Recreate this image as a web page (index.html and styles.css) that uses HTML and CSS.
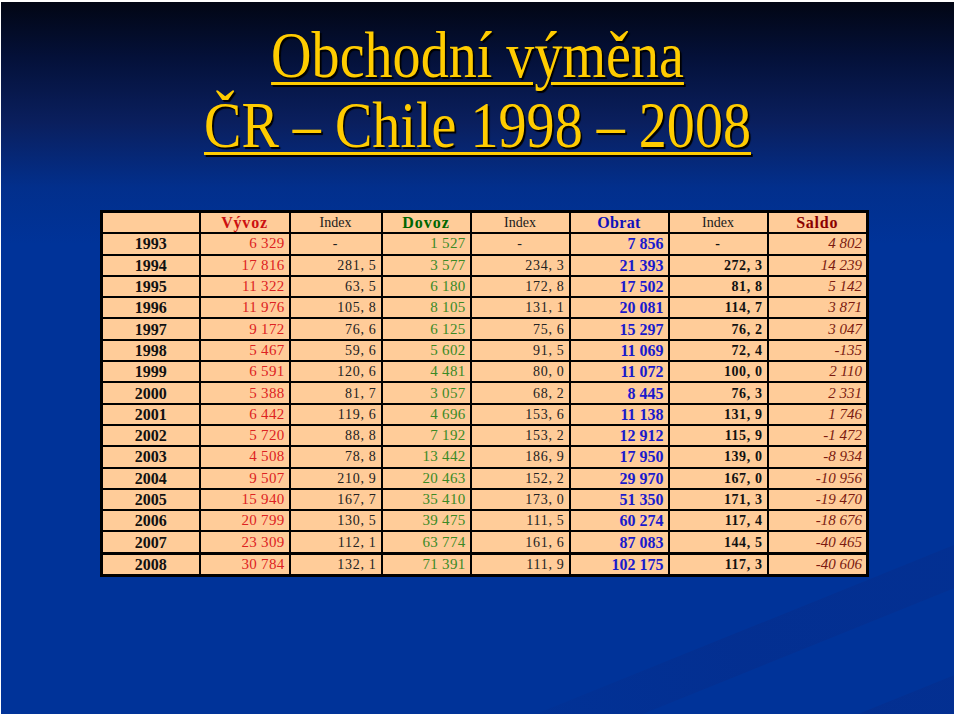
FILE: index.html
```html
<!DOCTYPE html>
<html lang="cs">
<head>
<meta charset="utf-8">
<title>Obchodní výměna ČR – Chile</title>
<link rel="stylesheet" href="styles.css">
</head>
<body>
<div class="slide">
  <h1 class="title">
    <span class="line"><span class="u">Obchodní výměna</span></span>
    <span class="line"><span class="u">ČR – Chile 1998 – 2008</span></span>
  </h1>
  <table class="trade">
    <colgroup>
      <col class="c-year"><col class="c-vyv"><col class="c-i1"><col class="c-dov"><col class="c-i2"><col class="c-obr"><col class="c-i3"><col class="c-sal">
    </colgroup>
    <thead>
      <tr>
        <th></th>
        <th class="h-vyv">Vývoz</th>
        <th class="h-idx">Index</th>
        <th class="h-dov">Dovoz</th>
        <th class="h-idx">Index</th>
        <th class="h-obr">Obrat</th>
        <th class="h-idx">Index</th>
        <th class="h-sal">Saldo</th>
      </tr>
    </thead>
    <tbody>
      <tr><td class="yr">1993</td><td class="vyv">6 329</td><td class="idx dash">-</td><td class="dov">1 527</td><td class="idx dash">-</td><td class="obr">7 856</td><td class="idxb dash">-</td><td class="sal">4 802</td></tr>
      <tr><td class="yr">1994</td><td class="vyv">17 816</td><td class="idx">281, 5</td><td class="dov">3 577</td><td class="idx">234, 3</td><td class="obr">21 393</td><td class="idxb">272, 3</td><td class="sal">14 239</td></tr>
      <tr><td class="yr">1995</td><td class="vyv">11 322</td><td class="idx">63, 5</td><td class="dov">6 180</td><td class="idx">172, 8</td><td class="obr">17 502</td><td class="idxb">81, 8</td><td class="sal">5 142</td></tr>
      <tr><td class="yr">1996</td><td class="vyv">11 976</td><td class="idx">105, 8</td><td class="dov">8 105</td><td class="idx">131, 1</td><td class="obr">20 081</td><td class="idxb">114, 7</td><td class="sal">3 871</td></tr>
      <tr><td class="yr">1997</td><td class="vyv">9 172</td><td class="idx">76, 6</td><td class="dov">6 125</td><td class="idx">75, 6</td><td class="obr">15 297</td><td class="idxb">76, 2</td><td class="sal">3 047</td></tr>
      <tr><td class="yr">1998</td><td class="vyv">5 467</td><td class="idx">59, 6</td><td class="dov">5 602</td><td class="idx">91, 5</td><td class="obr">11 069</td><td class="idxb">72, 4</td><td class="sal">-135</td></tr>
      <tr><td class="yr">1999</td><td class="vyv">6 591</td><td class="idx">120, 6</td><td class="dov">4 481</td><td class="idx">80, 0</td><td class="obr">11 072</td><td class="idxb">100, 0</td><td class="sal">2 110</td></tr>
      <tr><td class="yr">2000</td><td class="vyv">5 388</td><td class="idx">81, 7</td><td class="dov">3 057</td><td class="idx">68, 2</td><td class="obr">8 445</td><td class="idxb">76, 3</td><td class="sal">2 331</td></tr>
      <tr><td class="yr">2001</td><td class="vyv">6 442</td><td class="idx">119, 6</td><td class="dov">4 696</td><td class="idx">153, 6</td><td class="obr">11 138</td><td class="idxb">131, 9</td><td class="sal">1 746</td></tr>
      <tr><td class="yr">2002</td><td class="vyv">5 720</td><td class="idx">88, 8</td><td class="dov">7 192</td><td class="idx">153, 2</td><td class="obr">12 912</td><td class="idxb">115, 9</td><td class="sal">-1 472</td></tr>
      <tr><td class="yr">2003</td><td class="vyv">4 508</td><td class="idx">78, 8</td><td class="dov">13 442</td><td class="idx">186, 9</td><td class="obr">17 950</td><td class="idxb">139, 0</td><td class="sal">-8 934</td></tr>
      <tr><td class="yr">2004</td><td class="vyv">9 507</td><td class="idx">210, 9</td><td class="dov">20 463</td><td class="idx">152, 2</td><td class="obr">29 970</td><td class="idxb">167, 0</td><td class="sal">-10 956</td></tr>
      <tr><td class="yr">2005</td><td class="vyv">15 940</td><td class="idx">167, 7</td><td class="dov">35 410</td><td class="idx">173, 0</td><td class="obr">51 350</td><td class="idxb">171, 3</td><td class="sal">-19 470</td></tr>
      <tr><td class="yr">2006</td><td class="vyv">20 799</td><td class="idx">130, 5</td><td class="dov">39 475</td><td class="idx">111, 5</td><td class="obr">60 274</td><td class="idxb">117, 4</td><td class="sal">-18 676</td></tr>
      <tr><td class="yr">2007</td><td class="vyv">23 309</td><td class="idx">112, 1</td><td class="dov">63 774</td><td class="idx">161, 6</td><td class="obr">87 083</td><td class="idxb">144, 5</td><td class="sal">-40 465</td></tr>
      <tr class="last"><td class="yr">2008</td><td class="vyv">30 784</td><td class="idx">132, 1</td><td class="dov">71 391</td><td class="idx">111, 9</td><td class="obr">102 175</td><td class="idxb">117, 3</td><td class="sal">-40 606</td></tr>
    </tbody>
  </table>
</div>
</body>
</html>
```
FILE: styles.css
```css
html, body {
  margin: 0;
  padding: 0;
  background: #ffffff;
}

body {
  font-family: "Liberation Serif", "Times New Roman", serif;
}

.slide {
  position: relative;
  overflow: hidden;
  width: 953px;
  height: 712px;
  margin: 2px 6px 6px 1px;
  background: linear-gradient(to bottom, #020614 0%, #04113a 8%, #0a1f5e 17%, #022f8c 26%, #003399 34%, #003399 100%);
}

.slide::before,
.slide::after {
  content: "";
  position: absolute;
  height: 40px;
  width: 760px;
  left: 420px;
  transform-origin: left center;
  transform: rotate(-22deg);
  background: linear-gradient(to right, rgba(20, 50, 140, 0) 0%, rgba(10, 40, 130, 0.35) 45%, rgba(10, 40, 130, 0.25) 100%);
}

.slide::before {
  top: 760px;
}

.slide::after {
  top: 850px;
  left: 520px;
  height: 46px;
}

.title {
  position: relative;
  z-index: 1;
  margin: 0;
  padding-top: 18px;
  font-family: "Liberation Serif", "Times New Roman", serif;
  font-weight: normal;
  font-size: 66px;
  line-height: 70px;
  color: #ffcc00;
  text-align: center;
}

.line {
  display: block;
  transform: scaleX(0.85);
}

.u {
  text-decoration: underline;
  text-decoration-thickness: 3px;
  text-underline-offset: 5px;
  text-shadow: 2px 2px 1px #000000;
}

.trade {
  position: relative;
  z-index: 1;
  margin: 50px 0 0 99px;
  width: 766px;
  border-collapse: collapse;
  table-layout: fixed;
  border: 3px solid #000;
  background: #ffcc99;
}

.c-year { width: 98px; }
.c-vyv { width: 90px; }
.c-i1 { width: 92px; }
.c-dov { width: 89px; }
.c-i2 { width: 99px; }
.c-obr { width: 99px; }
.c-i3 { width: 99px; }
.c-sal { width: 100px; }

.trade th,
.trade td {
  border: 2px solid #000;
  padding: 0 4px 0 4px;
  height: 19.3px;
  line-height: 19px;
  white-space: nowrap;
  text-align: right;
  font-size: 15px;
}

.trade th {
  text-align: center;
  font-weight: bold;
  font-size: 16px;
}

.trade tr.last td {
  border-top-width: 3px;
}

.h-vyv { color: #cc1111; letter-spacing: 0.8px; }
.h-dov { color: #006600; letter-spacing: 1px; }
.h-obr { color: #1111bb; letter-spacing: 0.3px; }
.h-sal { color: #8b0000; letter-spacing: 0.8px; }
.trade th.h-idx {
  font-weight: normal;
  font-size: 14px;
  color: #1a1a1a;
}

.yr {
  text-align: center !important;
  font-weight: bold;
  font-size: 16px !important;
  color: #111;
}

.vyv { color: #dd2222; letter-spacing: 0.3px; }
.dov { color: #3b8a26; letter-spacing: 0.3px; }
.obr { color: #1a1acc; font-weight: bold; font-size: 16px !important; }
.sal { color: #7a1a10; font-style: italic; }

.idx {
  color: #222;
  font-size: 14px !important;
  letter-spacing: 0.7px;
}

.idxb {
  color: #111;
  font-weight: bold;
  font-size: 14px !important;
  letter-spacing: 0.6px;
}

.dash {
  text-align: center !important;
}
```
